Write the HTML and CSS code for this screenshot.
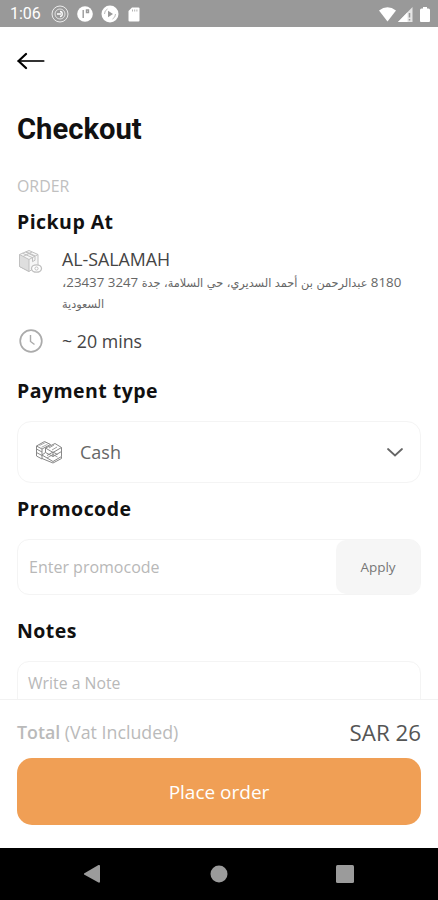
FILE: index.html
```html
<!DOCTYPE html>
<html lang="en">
  <head>
    <meta charset="UTF-8" />
    <meta name="viewport" content="width=device-width, initial-scale=1" />
    <title>Checkout</title>
    <link rel="stylesheet" href="styles.css">
  </head>
  <body>
    <!-- Status bar -->
    <div class="status-bar">
      <span class="time">1:06</span>
      <div class="status-left">
        <svg width="18" height="18" viewBox="0 0 18 18" fill="none" stroke="#fff">
          <circle cx="9" cy="9" r="8" stroke-width="1" opacity=".8" />
          <circle cx="9" cy="9" r="5" stroke-width="1" opacity=".7" />
          <path d="M6 9h4M9 6.500c3 0 3 5 0 5" stroke-width="1.300" />
        </svg>
        <svg width="16" height="16" viewBox="0 0 16 16">
          <circle cx="8" cy="8" r="7.800" fill="#fff" />
          <path d="M6.200 4v8M9.500 4h2v2.500h-2z" fill="none" stroke="#999" stroke-width="1.400" />
        </svg>
        <svg width="18" height="18" viewBox="0 0 18 18">
          <circle cx="9" cy="9" r="8.500" fill="#fff" />
          <path d="M7 5.800l5 3.200-5 3.200z" fill="#999" />
          <path d="M3.500 9a5.500 5.500 0 0 1 3-5M14.500 9a5.500 5.500 0 0 1-3 5" fill="none" stroke="#bbb" />
        </svg>
        <svg width="12" height="15" viewBox="0 0 12 15">
          <path d="M4 .5h6.500a1 1 0 0 1 1 1v12a1 1 0 0 1-1 1h-9a1 1 0 0 1-1-1V4z" fill="#fff" />
          <path d="M4.500 2.500v2M6.700 2.500v2M8.900 2.500v2" stroke="#aaa" stroke-width=".9" />
        </svg>
      </div>
      <div class="status-right">
        <svg width="17" height="15" viewBox="0 0 17 15">
          <path d="M0 3.500Q8.500-3 17 3.500L8.500 14.500z" fill="#fff" />
        </svg>
        <svg width="15" height="15" viewBox="0 0 15 15">
          <path d="M14.500 0v15H0z" fill="#fff" opacity=".75" />
          <path d="M9.500 5.300V15H0z" fill="#fff" />
          <path d="M11.500 6v4.500M11.500 12v1.500" stroke="#999" stroke-width="1.500" />
        </svg>
        <svg class="battery" width="10" height="15" viewBox="0 0 10 15">
          <path d="M3 0h4v1.500h1.500A1.500 1.500 0 0 1 10 3v11a1 1 0 0 1-1 1H1a1 1 0 0 1-1-1V3a1.500 1.500 0 0 1 1.500-1.500H3z" fill="#fff" />
        </svg>
      </div>
    </div>

    <!-- Scrollable content -->
    <main class="content">
      <button class="back" aria-label="Back">
        <svg width="28" height="18" viewBox="0 0 28 18" fill="none" stroke="#000" stroke-linecap="round">
          <path d="M1.500 9h25" stroke-width="2.200" stroke="#333" />
          <path d="M9 2L1.500 9 9 16" stroke-width="2.200" stroke-linejoin="round" />
        </svg>
      </button>

      <h1>Checkout</h1>

      <p class="label">ORDER</p>
      <h2 class="pickup-title">Pickup At</h2>

      <div class="info branch">
        <svg class="box-icon" width="26" height="26" viewBox="0 0 26 26" fill="none" stroke="#c0c0c0" stroke-linejoin="round">
          <path d="M1.500 5.500L11 1.500l9 4v11L11 22.500l-9.500-5z" fill="#f6f6f6" />
          <path d="M1.500 5.500L11 10.500v12l-9.500-5z" fill="#dedede" />
          <path d="M11 10.500l9-5M4.500 4.200l10 4.500v4l2.500-1.500V7.500L7.500 3M8 2.700l9 4.200M5 7.500l9-4.500" />
          <ellipse cx="18.500" cy="19.500" rx="5" ry="3.700" fill="#fff" stroke-width="1.300" />
          <circle cx="18.500" cy="19.500" r="1.600" />
        </svg>
        <div class="branch-text">
          <div class="branch-name">AL-SALAMAH</div>
          <div class="address" dir="rtl" lang="ar">8180 <span>عبدالرحمن بن أحمد السديري، حي السلامة، جدة</span> 3247 23437، <br><span>السعودية</span></div>
        </div>
      </div>

      <div class="info eta">
        <svg width="26" height="26" viewBox="0 0 26 26" fill="none" stroke="#ababab">
          <circle cx="13" cy="13" r="10.800" stroke-width="1.700" />
          <path d="M12.500 7v6.500l4 3" stroke-width="1.400" />
        </svg>
        <span>~ 20 mins</span>
      </div>

      <h2 class="payment-title">Payment type</h2>
      <div class="select">
        <svg width="28" height="24" viewBox="0 0 28 24" fill="none" stroke="#888" stroke-linejoin="round">
          <path d="M1.500 6l8-4.500 6 3M15.500 4.500L7 9 1.500 6M15 6l5-2.500 6.500 4-8.500 5-7.500-4.500zM1.500 6v10L7 19M7 9v10M1.500 9L7 12M1.500 12.500L7 15.500" />
          <path d="M4.500 5.500l6-3M6.500 7.300l6-3" stroke-width=".7" />
          <path d="M10.500 8v4.500L7 15l11 6.500 8.500-5v-9M10.500 12.500L18 16.500l8.500-5M7 18.500l11 4.500 8.500-4.500v-2M18 12.500v4M12 15.500l6-3.500 4.500 2.500" />
          <path d="M14 8l5-3M17 10l5-3M12 18l6-3.500 4.500 2.500" stroke-width=".8" />
        </svg>
        <span class="select-value">Cash</span>
        <svg width="18" height="11" viewBox="0 0 18 11" fill="none" stroke="#666" stroke-width="1.800" stroke-linecap="round">
          <path d="M2 2l7 6.500L16 2" />
        </svg>
      </div>

      <h2 class="promo-title">Promocode</h2>
      <div class="promo">
        <span class="placeholder">Enter promocode</span>
        <button class="apply">Apply</button>
      </div>

      <h2 class="notes-title">Notes</h2>
      <div class="note"><span class="placeholder">Write a Note</span></div>
    </main>

    <!-- Order total -->
    <footer class="summary">
      <div class="total">
        <span class="total-label"><b>Total</b> (Vat Included)</span>
        <span class="total-value">SAR 26</span>
      </div>
      <button class="place-order">Place order</button>
    </footer>

    <!-- Android navigation -->
    <nav class="nav-bar">
      <svg width="18" height="20" viewBox="0 0 18 20"><path d="M1 9.500L15.500 1q1.500-.5 1.500 1v15.500q0 1.500-1.500 1L1 10.500z" fill="#9b9b9b" /></svg>
      <svg width="18" height="18" viewBox="0 0 18 18"><circle cx="9" cy="9" r="8.500" fill="#9b9b9b" /></svg>
      <svg width="18" height="18" viewBox="0 0 18 18"><rect width="18" height="18" rx="1.500" fill="#9b9b9b" /></svg>
    </nav>
  </body>
</html>
```
FILE: styles.css
```css
* {
  box-sizing: border-box;
}

body {
  margin: 0;
  height: 900px;
  display: flex;
  flex-direction: column;
  overflow: hidden;
  background: #fff;
  color: #111;
  font-family: "Open Sans", "DejaVu Sans", sans-serif;
}

h1,
h2,
p {
  margin: 0;
}

svg {
  display: block;
  flex: none;
}

button {
  border: none;
  padding: 0;
  font-family: inherit;
}

/* Status bar */
.status-bar {
  height: 27px;
  flex: none;
  display: flex;
  align-items: center;
  padding: 1px 8px 0 10px;
  background: #999;
  color: #fff;
}

.time {
  width: 41px;
  font: 16px/20px Roboto, sans-serif;
}

.status-left,
.status-right {
  display: flex;
  align-items: center;
}

.status-left {
  gap: 8px;
}

.status-left svg:last-child {
  margin-left: 1px;
}

.status-right {
  margin-left: auto;
  gap: 2px;
}

.battery {
  margin-left: 5px;
}

/* Content */
.content {
  flex: 1;
  min-height: 0;
  overflow: hidden;
  padding: 0 17px;
}

.back {
  display: flex;
  align-items: center;
  height: 68px;
  background: none;
}

h1 {
  margin-top: 14px;
  font: 700 29.2px/40px Roboto, sans-serif;
}

.label {
  margin-top: 27px;
  font-size: 15.9px;
  line-height: 20px;
  color: #c0c0c0;
}

h2 {
  font-size: 19.5px;
  font-weight: 700;
  line-height: 28px;
  letter-spacing: 0.45px;
}

.pickup-title {
  margin-top: 12px;
}

.info {
  display: flex;
  gap: 18px;
  padding-left: 1px;
  color: #444;
}

.branch {
  height: 68px;
  margin-top: 10px;
}

.box-icon {
  margin-top: 3px;
}

.branch-name {
  font-size: 17.8px;
  line-height: 26px;
}

.address {
  width: 342px;
  font-size: 13.3px;
  line-height: 21px;
  text-align: left;
  white-space: nowrap;
  color: #666;
}

.address span {
  font-family: "DejaVu Sans", sans-serif;
  font-size: 11.3px;
  line-height: 1;
}

.eta {
  align-items: center;
  margin-top: 14px;
  font-size: 17.8px;
  line-height: 26px;
}

.payment-title {
  margin-top: 23px;
}

.select {
  display: flex;
  align-items: center;
  height: 62px;
  margin-top: 16px;
  padding: 0 16px 0 17px;
  border: 1px solid #f4f4f4;
  border-radius: 14px;
}

.select-value {
  flex: 1;
  margin-left: 17px;
  font-size: 18px;
  color: #666;
}

.promo-title {
  margin-top: 12px;
}

.promo {
  display: flex;
  align-items: center;
  justify-content: space-between;
  height: 56px;
  margin-top: 16px;
  padding-left: 11px;
  border: 1px solid #f4f4f4;
  border-radius: 12px;
}

.placeholder {
  font-size: 16px;
  color: #b8b8b8;
}

.apply {
  width: 84px;
  height: 54px;
  border-radius: 10px;
  background: #f6f6f6;
  font-size: 13.5px;
  color: #777;
}

.notes-title {
  margin-top: 22px;
}

.note {
  height: 90px;
  margin-top: 16px;
  padding: 10px 10px;
  border: 1px solid #f4f4f4;
  border-radius: 12px;
  line-height: 22px;
}

.note .placeholder {
  font-size: 15.8px;
}

/* Total and submit */
.summary {
  flex: none;
  height: 149px;
  padding: 16px 17px 0;
  border-top: 1px solid #f2f2f2;
}

.total {
  display: flex;
  align-items: center;
  justify-content: space-between;
  height: 32px;
}

.total-label {
  font-size: 17.8px;
  color: #bababa;
}

.total-label b {
  font-weight: 600;
}

.total-value {
  font-size: 22.3px;
  color: #555;
}

.place-order {
  display: block;
  width: 100%;
  height: 67px;
  margin-top: 10px;
  border-radius: 15px;
  background: #f09f55;
  font-size: 19px;
  color: #fff;
}

/* System navigation */
.nav-bar {
  flex: none;
  height: 52px;
  display: flex;
  align-items: center;
  justify-content: space-between;
  padding: 0 84px 0 83px;
  background: #000;
}
```
